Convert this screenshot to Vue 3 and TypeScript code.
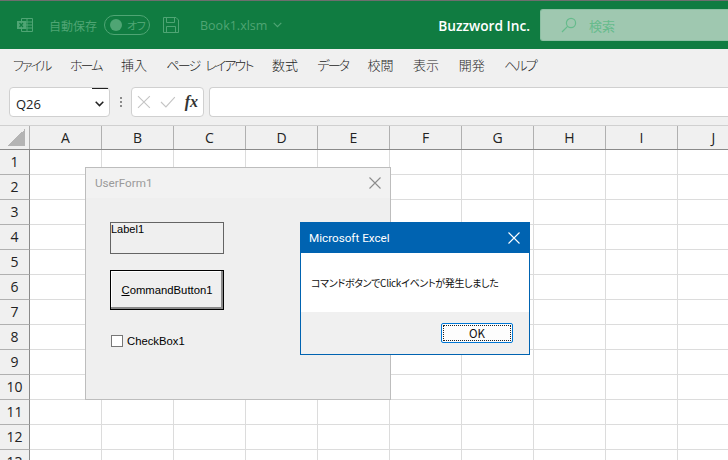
<script setup lang="ts">
const menus = [
  { label: 'ファイル', kana: true },
  { label: 'ホーム', kana: true },
  { label: '挿入', kana: false },
  { label: 'ページ レイアウト', kana: true },
  { label: '数式', kana: false },
  { label: 'データ', kana: true },
  { label: '校閲', kana: false },
  { label: '表示', kana: false },
  { label: '開発', kana: false },
  { label: 'ヘルプ', kana: true },
];
const columns = ['A', 'B', 'C', 'D', 'E', 'F', 'G', 'H', 'I', 'J'];
const rows = Array.from({ length: 13 }, (_, i) => i + 1);
</script>

<template>
  <div class="excel">
    <header class="title-bar">
      <svg class="app-icon" width="16" height="16" viewBox="0 0 16 16" fill="none" stroke="#4fa574">
        <path d="M4.5 1.5h11v13h-11v-3M4.5 4.5v-3M10 1.5v13M4.5 5h11M4.5 8h11M4.5 11h11" />
        <rect x="0" y="4" width="9" height="8" fill="#4fa574" stroke="none" />
        <path d="M2.5 6l3.5 4M6 6l-3.5 4" stroke="#107c41" stroke-width="1.2" />
      </svg>
      <span class="autosave">自動保存</span>
      <span class="toggle"><i class="knob"></i><b>オフ</b></span>
      <svg class="save-icon" width="16" height="16" viewBox="0 0 16 16" fill="none" stroke="#4fa574">
        <path d="M.5.5h12.5l2.5 2.5v12.5H.5zM3.5.5v5h8v-5M3.5 15.5v-6h9v6" />
      </svg>
      <span class="file-name">Book1.xlsm</span>
      <svg class="chevron" width="9" height="6" viewBox="0 0 9 6" fill="none" stroke="#4fa574" stroke-width="1.2">
        <path d="M.7.8l3.8 3.8L8.3.8" />
      </svg>
      <span class="company">Buzzword Inc.</span>
      <div class="search">
        <svg width="16" height="16" viewBox="0 0 16 16" fill="none" stroke="#66bb8c" stroke-width="1.2">
          <circle cx="10" cy="6" r="4.6" />
          <path d="M6.6 9.4L1 15" />
        </svg>
        <span>検索</span>
      </div>
    </header>

    <nav class="menu-bar">
      <span v-for="menu in menus" :key="menu.label" class="menu-item" :class="{ kana: menu.kana }">{{ menu.label }}</span>
    </nav>

    <div class="formula-bar">
      <div class="name-box">
        <span>Q26</span>
        <svg width="9" height="6" viewBox="0 0 9 6" fill="none" stroke="#222" stroke-width="1.5">
          <path d="M.7.8l3.8 3.8L8.3.8" />
        </svg>
      </div>
      <span class="grip"><i></i><i></i><i></i></span>
      <div class="formula-buttons">
        <svg width="14" height="14" viewBox="0 0 14 14" fill="none" stroke="#c4c4c4" stroke-width="1.1">
          <path d="M1 1l12 12M13 1L1 13" />
        </svg>
        <svg width="16" height="12" viewBox="0 0 16 12" fill="none" stroke="#c4c4c4" stroke-width="1.1">
          <path d="M1 6l5 5L15 1" />
        </svg>
        <em>fx</em>
      </div>
      <div class="formula-input"></div>
    </div>

    <main class="sheet">
      <div class="col-head">
        <div class="corner"><i></i></div>
        <div v-for="col in columns" :key="col" class="col-cell">{{ col }}</div>
      </div>
      <div v-for="row in rows" :key="row" class="row">
        <div class="row-cell">{{ row }}</div>
        <div v-for="col in columns" :key="col" class="cell"></div>
      </div>

      <section class="user-form">
        <div class="form-title">
          <span>UserForm1</span>
          <svg width="12" height="12" viewBox="0 0 12 12" fill="none" stroke="#8c8c8c" stroke-width="1.1">
            <path d="M.5.5l11 11M11.5.5l-11 11" />
          </svg>
        </div>
        <div class="form-body">
          <div class="vb-label">Label1</div>
          <div class="vb-button"><span><u>C</u>ommandButton1</span></div>
          <label class="vb-check"><i></i>CheckBox1</label>
        </div>
      </section>

      <section class="msg-box">
        <div class="msg-title">
          <span>Microsoft Excel</span>
          <svg width="12" height="12" viewBox="0 0 12 12" fill="none" stroke="#fff" stroke-width="1.1">
            <path d="M.5.5l11 11M11.5.5l-11 11" />
          </svg>
        </div>
        <div class="msg-text">コマンドボタンでClickイベントが発生しました</div>
        <div class="msg-foot">
          <div class="ok-button"><span>OK</span></div>
        </div>
      </section>
    </main>
  </div>
</template>

<style scoped>
.excel {
  width: 728px;
  height: 460px;
  overflow: hidden;
  display: flex;
  flex-direction: column;
  background: #fff;
  font-family: "Noto Sans CJK JP", "Noto Sans", sans-serif;
  font-feature-settings: "palt";
}

.title-bar {
  height: 48px;
  flex: none;
  border-top: 1px solid #6e6e6e;
  background: #107c41;
  display: flex;
  align-items: center;
  padding-left: 17px;
  color: #4fa574;
  font-size: 12px;
}

.autosave {
  margin-left: 16px;
  font-feature-settings: normal;
}

.toggle {
  margin-left: 7px;
  width: 46px;
  height: 20px;
  box-sizing: border-box;
  border: 1px solid #4fa574;
  border-radius: 10px;
  display: flex;
  align-items: center;
  padding-left: 5px;
}

.knob {
  width: 12px;
  height: 12px;
  border-radius: 50%;
  background: #4fa574;
}

.toggle b {
  margin-left: 5px;
  font-weight: 400;
  font-size: 11px;
  letter-spacing: -0.5px;
}

.save-icon {
  margin-left: 13px;
}

.file-name {
  margin-left: 21px;
  font-family: "Open Sans", sans-serif;
  font-size: 12.5px;
}

.chevron {
  margin-left: 6px;
}

.company {
  margin-left: auto;
  color: #fff;
  font-family: "Open Sans", sans-serif;
  font-size: 13.7px;
  font-weight: 600;
}

.search {
  margin-left: 10px;
  width: 188px;
  height: 32px;
  box-sizing: border-box;
  border-radius: 3px 0 0 3px;
  background: #9fc8b0;
  border: 1px solid #8cc0a3;
  border-right: 0;
  display: flex;
  align-items: center;
  gap: 12px;
  padding-left: 20px;
  color: #66bb8c;
  font-size: 13px;
}

.menu-bar {
  height: 38px;
  flex: none;
  background: #f0f0f0;
  display: flex;
  align-items: center;
  padding: 0 0 7px 13px;
  box-sizing: border-box;
  gap: 19.5px;
  color: #262626;
  font-size: 13px;
  font-weight: 300;
}

.menu-item.kana {
  letter-spacing: -1.9px;
  word-spacing: 5px;
}

.formula-bar {
  height: 38px;
  flex: none;
  box-sizing: border-box;
  background: #f0f0f0;
  display: flex;
  align-items: flex-start;
  padding: 0 0 0 9px;
}

.name-box,
.formula-buttons,
.formula-input {
  height: 30px;
  box-sizing: border-box;
  background: #fff;
  border: 1px solid #d0d0d0;
  display: flex;
  align-items: center;
}

.name-box {
  width: 101px;
  border-radius: 4px;
  padding: 3px 5px 0 6px;
  justify-content: space-between;
  font-size: 13px;
  color: #222;
  font-family: "Open Sans", sans-serif;
  position: relative;
}

.name-box::after {
  content: "";
  position: absolute;
  top: 0;
  right: 1px;
  width: 16px;
  height: 1px;
  background: #222;
}

.grip {
  width: 21px;
  height: 30px;
  display: flex;
  flex-direction: column;
  align-items: center;
  justify-content: center;
  gap: 2px;
}

.grip i {
  width: 2px;
  height: 2px;
  background: #8a8a8a;
}

.formula-buttons {
  width: 73px;
  border-radius: 4px;
  padding: 0 5px;
  gap: 9px;
}

.formula-buttons em {
  font-family: "Liberation Serif", serif;
  font-size: 16px;
  font-weight: 700;
  color: #333;
}

.formula-input {
  margin-left: 5px;
  flex: 1;
  border-radius: 4px 0 0 4px;
  border-right: 0;
}

.sheet {
  position: relative;
  flex: 1;
  overflow: hidden;
}

.col-head,
.row {
  display: flex;
}

.col-head {
  height: 25px;
  box-sizing: border-box;
  background: #f0f0f0;
  border-top: 1px solid #d0d0d0;
  border-bottom: 1px solid #8a8a8a;
}

.corner {
  width: 30px;
  flex: none;
  box-sizing: border-box;
  border-right: 1px solid #b0b0b0;
  display: flex;
  align-items: flex-end;
  justify-content: flex-end;
  padding: 0 4px 3px 0;
}

.corner i {
  width: 17px;
  height: 17px;
  background: linear-gradient(to bottom right, transparent 50%, #b4b4b4 50%);
}

.col-cell {
  width: 72px;
  flex: none;
  box-sizing: border-box;
  border-right: 1px solid #b0b0b0;
  display: flex;
  align-items: center;
  justify-content: center;
  font-size: 14px;
  color: #222;
  font-family: "Open Sans", sans-serif;
}

.row {
  height: 25px;
}

.row-cell {
  width: 30px;
  flex: none;
  box-sizing: border-box;
  background: #f0f0f0;
  border-right: 1px solid #8a8a8a;
  border-bottom: 1px solid #b0b0b0;
  display: flex;
  align-items: center;
  justify-content: center;
  padding-bottom: 2px;
  font-size: 14px;
  color: #222;
  font-family: "Open Sans", sans-serif;
}

.cell {
  width: 72px;
  flex: none;
  box-sizing: border-box;
  border-right: 1px solid #dcdcdc;
  border-bottom: 1px solid #dcdcdc;
}

.user-form {
  position: absolute;
  left: 85px;
  top: 42px;
  width: 306px;
  height: 233px;
  box-sizing: border-box;
  background: #efefef;
  border: 1px solid #bdbdbd;
  display: flex;
  flex-direction: column;
}

.form-title {
  height: 30px;
  flex: none;
  background: #f2f2f2;
  display: flex;
  align-items: center;
  justify-content: space-between;
  padding: 0 9px;
  color: #9a9a9a;
  font-size: 11.7px;
  font-family: Roboto, sans-serif;
}

.form-body {
  padding: 24px 0 0 24px;
  font-family: "Liberation Sans", sans-serif;
  font-size: 11.3px;
  color: #000;
}

.vb-label {
  width: 114px;
  height: 32px;
  box-sizing: border-box;
  border: 1px solid #646464;
  line-height: 12px;
  font-size: 11px;
}

.vb-button {
  margin-top: 16px;
  width: 114px;
  height: 40px;
  box-sizing: border-box;
  border: 1px solid #000;
  box-shadow: inset -2px -2px 0 #8a8a8a, inset 1px 1px 0 #fff;
  display: flex;
  align-items: center;
  justify-content: center;
}

.vb-check {
  margin-top: 25px;
  display: flex;
  align-items: center;
  gap: 4px;
}

.vb-check i {
  margin-left: 1px;
  width: 12px;
  height: 12px;
  box-sizing: border-box;
  background: #fff;
  border: 1px solid #777;
}

.msg-box {
  position: absolute;
  left: 300px;
  top: 97px;
  width: 230px;
  height: 133px;
  box-sizing: border-box;
  background: #fff;
  border: 1px solid #0063b1;
  display: flex;
  flex-direction: column;
}

.msg-title {
  height: 30px;
  flex: none;
  background: #0063b1;
  color: #fff;
  display: flex;
  align-items: center;
  justify-content: space-between;
  padding: 0 9px 1px 8px;
  box-sizing: border-box;
  font-size: 11.7px;
  font-family: Roboto, sans-serif;
}

.msg-text {
  height: 59px;
  flex: none;
  display: flex;
  align-items: center;
  padding-left: 10px;
  font-size: 10px;
  letter-spacing: -0.33px;
  white-space: nowrap;
  color: #111;
}

.msg-foot {
  flex: 1;
  background: #f0f0f0;
  display: flex;
  align-items: center;
  justify-content: flex-end;
  padding-right: 16px;
}

.ok-button {
  width: 72px;
  height: 20px;
  box-sizing: border-box;
  background: #fdfdfd;
  border: 1px solid #0078d7;
  border-radius: 2px;
  padding: 1px;
  font-size: 11.5px;
  color: #111;
}

.ok-button span {
  display: flex;
  align-items: center;
  justify-content: center;
  height: 100%;
  box-sizing: border-box;
  border: 1px dotted #222;
}
</style>
